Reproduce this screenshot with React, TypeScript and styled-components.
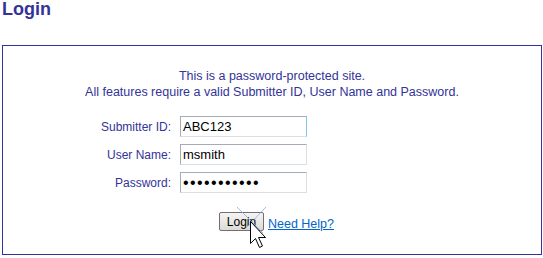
import React from "react";
import styled, { createGlobalStyle } from "styled-components";

const Global = createGlobalStyle`
  html, body { margin: 0; padding: 0; background: #fff; }
  body { font-family: "Liberation Sans", Arial, sans-serif; }
`;

const Page = styled.div`
  position: relative;
  width: 543px;
  height: 258px;
  overflow: hidden;
`;

const Title = styled.h1`
  margin: 0;
  padding: 0 0 0 2px;
  font-size: 18px;
  line-height: 18px;
  font-weight: bold;
  color: #333399;
`;

const Box = styled.div`
  margin: 27px 0 0 2px;
  width: 540px;
  height: 210px;
  border: 1px solid #333399;
  display: flex;
  flex-direction: column;
  align-items: center;
  padding-top: 22px;
  box-sizing: border-box;
`;

const Intro = styled.p`
  margin: 0;
  text-align: center;
  font-size: 12.5px;
  line-height: 16px;
  color: #333399;
`;

const Form = styled.div`
  align-self: flex-start;
  margin: 16px 0 0 71px;
  display: grid;
  grid-template-columns: 97px 127px;
  column-gap: 9px;
  row-gap: 7px;
  align-items: center;
`;

const Label = styled.label`
  text-align: right;
  font-size: 12px;
  color: #333399;
`;

const Input = styled.input<{ $focus?: boolean; $secret?: boolean }>`
  box-sizing: border-box;
  width: 127px;
  height: 21px;
  margin: 0;
  padding: 0 2px;
  font-family: "Liberation Sans", Arial, sans-serif;
  font-size: ${(p) => (p.$secret ? "16px" : "13px")};
  letter-spacing: ${(p) => (p.$secret ? "1.4px" : "0")};
  color: #000;
  border: 1px solid #a5acb5;
  border-right-color: ${(p) => (p.$focus ? "#7ec8f5" : "#dcdfe3")};
  border-bottom-color: #dcdfe3;
  outline: none;
  background: #fff;
`;

const Actions = styled.div`
  margin-top: 19px;
  display: flex;
  align-items: flex-end;
  gap: 4px;
  margin-left: 9px;
`;

const Button = styled.button`
  box-sizing: border-box;
  width: 45px;
  height: 19px;
  padding: 0;
  font-family: "Liberation Sans", Arial, sans-serif;
  font-size: 12px;
  color: #000;
  border: 1px solid #7a6a74;
  border-radius: 2px;
  background: linear-gradient(#f4f4f2, #dcdbd6);
`;

const Link = styled.a`
  font-size: 12.5px;
  color: #0066cc;
  text-decoration: underline;
  line-height: 14px;
`;

const Cursor = styled.svg`
  position: absolute;
  left: 236px;
  top: 206px;
`;

export default function App() {
  return (
    <Page>
      <Global />
      <Title>Login</Title>
      <Box>
        <Intro>
          This is a password-protected site.
          <br />
          All features require a valid Submitter ID, User Name and Password.
        </Intro>
        <Form>
          <Label>Submitter ID:</Label>
          <Input $focus defaultValue="ABC123" />
          <Label>User Name:</Label>
          <Input defaultValue="msmith" />
          <Label>Password:</Label>
          <Input $secret type="password" defaultValue="abcdefghijk" />
        </Form>
        <Actions>
          <Button>Login</Button>
          <Link href="#">Need Help?</Link>
        </Actions>
      </Box>
      <Cursor width="34" height="44" viewBox="0 0 34 44">
        <line x1="1" y1="1" x2="27" y2="27" stroke="#8fa8e6" strokeWidth="1" opacity="0.8" />
        <line x1="30" y1="1" x2="10" y2="22" stroke="#8fa8e6" strokeWidth="1" opacity="0.8" />
        <path
          d="M14.5 15.5 L14.5 37.5 L19.5 32.5 L23.5 41.5 L26.5 40 L22.5 31.5 L29.5 31.5 Z"
          fill="#fff"
          stroke="#000"
          strokeWidth="1"
        />
      </Cursor>
    </Page>
  );
}
